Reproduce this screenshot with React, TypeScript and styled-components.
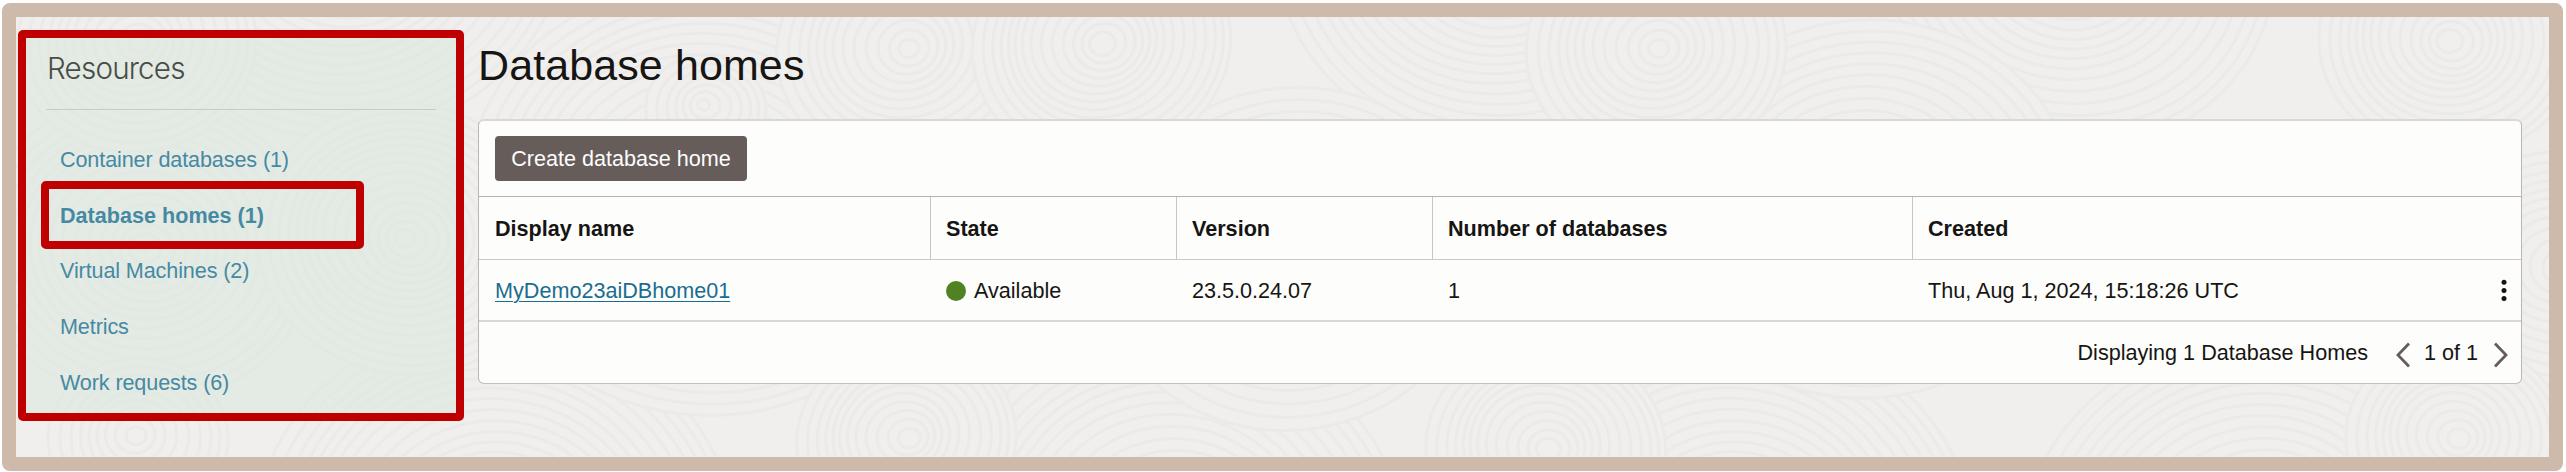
import React from "react";
import styled, { createGlobalStyle } from "styled-components";

const GlobalStyle = createGlobalStyle`
  * { box-sizing: border-box; }
  body {
    margin: 0;
    background: #fff;
    font-family: "Liberation Sans", Arial, Helvetica, sans-serif;
    font-size: 21.6px;
    color: #161513;
  }
`;

const Page = styled.div`
  width: 2566px;
  height: 472px;
  padding: 3px 3px 1px 2px;
`;

const Frame = styled.div`
  position: relative;
  display: flex;
  align-items: flex-start;
  gap: 14px;
  height: 468px;
  padding: 13px 27px 0 2px;
  border: 14px solid #cdbaaa;
  border-radius: 8px;
  background: #f0efed;
  background-clip: padding-box;
`;

const Texture = styled.svg`
  position: absolute;
  inset: 0;
  width: 100%;
  height: 100%;
`;

const Sidebar = styled.aside`
  position: relative;
  flex: none;
  width: 446px;
  height: 391px;
  border: 8px solid #c00000;
  border-radius: 5px;
  background: rgba(218, 231, 220, 0.55);
`;

const SidebarTitle = styled.h2`
  margin: 0 20px 0 20px;
  padding-left: 1px;
  height: 72px;
  border-bottom: 1px solid #c6ccc7;
  font-family: "Inter", "Liberation Sans", sans-serif;
  font-size: 29.6px;
  font-weight: 300;
  line-height: 60px;
  letter-spacing: -0.8px;
  color: #484d48;
`;

const ResourceList = styled.ul`
  list-style: none;
  margin: 0;
  padding: 22.2px 0 0 34px;
`;

const ResourceItem = styled.li<{ $active?: boolean }>`
  position: relative;
  height: 55.6px;
  line-height: 55.6px;
  font-weight: ${(p) => (p.$active ? 700 : 400)};
  letter-spacing: ${(p) => (p.$active ? 0 : -0.12)}px;
  color: #4689a3;
  white-space: nowrap;
`;

const Highlight = styled.span`
  position: absolute;
  left: -19px;
  top: -7px;
  width: 323px;
  height: 68px;
  border: 8px solid #c00000;
  border-radius: 5px;
`;

const Main = styled.main`
  position: relative;
  flex: 1;
  padding-top: 5px;
`;

const Title = styled.h1`
  margin: 0 0 24px;
  font-size: 43px;
  font-weight: 400;
  line-height: 60px;
  letter-spacing: 0.1px;
`;

const Card = styled.section`
  height: 265px;
  border: 1px solid #bcb6b1;
  border-top: 2px solid #d9d8d6;
  border-bottom-color: #c3c0bd;
  border-radius: 6px;
  background: #fdfdfb;
`;

const Toolbar = styled.div`
  display: flex;
  align-items: center;
  height: 76px;
  padding-left: 16px;
  border-bottom: 1px solid #bab1a9;
`;

const CreateButton = styled.button`
  width: 252px;
  height: 45px;
  padding: 1px 0 0;
  border: 0;
  border-radius: 4px;
  background: #665d5b;
  color: #fdfdfb;
  font: inherit;
`;

const Row = styled.div<{ $head?: boolean }>`
  display: grid;
  grid-template-columns: 452px 246px 256px 480px 1fr;
  height: ${(p) => (p.$head ? 63 : 62)}px;
  border-bottom: ${(p) => (p.$head ? "1px solid #cbc8c5" : "2px solid #d9d8d6")};
`;

const Cell = styled.div<{ $head?: boolean }>`
  display: flex;
  align-items: center;
  padding: 1px 0 0 15px;
  border-right: 1px solid ${(p) => (p.$head ? "#c9c5c1" : "transparent")};
  font-weight: ${(p) => (p.$head ? 700 : 400)};
  white-space: nowrap;

  &:first-child {
    padding-left: 16px;
  }

  &:last-child {
    border-right: 0;
  }
`;

const HomeLink = styled.a`
  color: #1a6d91;
  text-decoration: underline;
  text-decoration-thickness: 1px;
  text-underline-offset: 3px;
`;

const StatusDot = styled.span`
  width: 20px;
  height: 20px;
  margin-right: 8px;
  border-radius: 50%;
  background: #508223;
`;

const Kebab = styled.svg`
  width: 8px;
  height: 24px;
  margin: 0 13px 0 auto;
`;

const Footer = styled.div`
  display: flex;
  align-items: center;
  justify-content: flex-end;
  height: 62px;
  padding-right: 12px;
`;

const Chevron = styled.svg`
  width: 16px;
  height: 26px;
  margin-top: 4px;
`;

const PageCount = styled.span`
  margin: 0 15px 0 13px;
`;

const Summary = styled.span`
  margin-right: 27px;
`;

const resources = [
  "Container databases (1)",
  "Database homes (1)",
  "Virtual Machines (2)",
  "Metrics",
  "Work requests (6)",
];

const headings = ["Display name", "State", "Version", "Number of databases", "Created"];

/* centre x, centre y, radius, distance between rings */
const swirls = [
  [480, 520, 240, 11],
  [1160, 520, 230, 12],
  [1720, 520, 240, 11],
  [2240, 530, 240, 12],
  [330, -80, 220, 11],
  [1480, -70, 220, 11],
  [2050, -60, 210, 12],
  [690, 180, 240, 12],
  [1275, 240, 190, 14],
  [1850, 190, 210, 13],
  [130, 230, 170, 11],
  [390, 220, 150, 10],
  [2545, 250, 130, 11],
  [690, 90, 60, 9],
  [890, 30, 130, 10],
  [1085, 25, 130, 9],
  [1640, 30, 130, 10],
  [2433, 22, 130, 9],
  [120, 25, 120, 10],
  [122, 420, 90, 10],
  [890, 420, 110, 9],
  [1530, 430, 120, 9],
  [2440, 420, 110, 9],
];

function Swirl({ x, y, r, step }: { x: number; y: number; r: number; step: number }) {
  const rings: number[] = [];
  for (let k = r; k > 4; k -= step) rings.push(k);
  return (
    <g>
      {rings.map((k, i) => (
        <ellipse
          key={k}
          cx={x + Math.sin(i * 0.7) * 3}
          cy={y + Math.cos(i * 0.5) * 2}
          rx={k}
          ry={k * 0.9}
          transform={`rotate(${(x % 7) * 5 - 15} ${x} ${y})`}
        />
      ))}
    </g>
  );
}

export default function App() {
  return (
    <Page>
      <GlobalStyle />
      <Frame>
        <Texture aria-hidden="true" fill="#f0efed" stroke="#ebeae8" strokeWidth="3">
          {swirls.map(([x, y, r, step]) => (
            <Swirl key={`${x}-${y}`} x={x} y={y} r={r} step={step} />
          ))}
        </Texture>
        <Sidebar>
          <SidebarTitle>Resources</SidebarTitle>
          <ResourceList>
            {resources.map((label, i) => (
              <ResourceItem key={label} $active={i === 1}>
                {label}
                {i === 1 && <Highlight />}
              </ResourceItem>
            ))}
          </ResourceList>
        </Sidebar>
        <Main>
          <Title>Database homes</Title>
          <Card>
            <Toolbar>
              <CreateButton>Create database home</CreateButton>
            </Toolbar>
            <Row $head>
              {headings.map((h) => (
                <Cell key={h} $head>{h}</Cell>
              ))}
            </Row>
            <Row>
              <Cell><HomeLink>MyDemo23aiDBhome01</HomeLink></Cell>
              <Cell><StatusDot />Available</Cell>
              <Cell>23.5.0.24.07</Cell>
              <Cell>1</Cell>
              <Cell>
                Thu, Aug 1, 2024, 15:18:26 UTC
                <Kebab viewBox="0 0 8 24" fill="#161513">
                  <circle cx="4" cy="3.2" r="2.5" />
                  <circle cx="4" cy="11.4" r="2.5" />
                  <circle cx="4" cy="19.6" r="2.5" />
                </Kebab>
              </Cell>
            </Row>
            <Footer>
              <Summary>Displaying 1 Database Homes</Summary>
              <Chevron viewBox="0 0 16 26" fill="none" stroke="#665d5b" strokeWidth="2.8">
                <path d="M14 1.5 L3 13 L14 24.5" />
              </Chevron>
              <PageCount>1 of 1</PageCount>
              <Chevron viewBox="0 0 16 26" fill="none" stroke="#665d5b" strokeWidth="2.8">
                <path d="M2 1.5 L13 13 L2 24.5" />
              </Chevron>
            </Footer>
          </Card>
        </Main>
      </Frame>
    </Page>
  );
}
